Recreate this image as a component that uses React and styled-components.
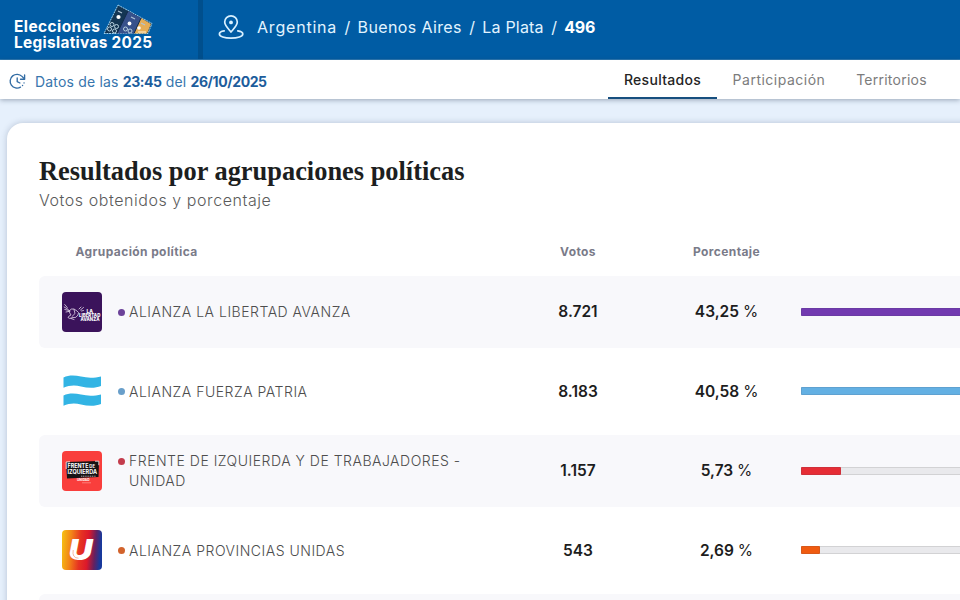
import React from 'react'
import styled, { createGlobalStyle } from 'styled-components'

const parties = [
  { id: 'lla', name: ['ALIANZA LA LIBERTAD AVANZA'], votes: '8.721', percent: 43.25, color: '#723ab0', dot: '#6c4299' },
  { id: 'fp', name: ['ALIANZA FUERZA PATRIA'], votes: '8.183', percent: 40.58, color: '#63b0e3', dot: '#699fca' },
  { id: 'fit', name: ['FRENTE DE IZQUIERDA Y DE TRABAJADORES -', 'UNIDAD'], votes: '1.157', percent: 5.73, color: '#e62d35', dot: '#c33c4c' },
  { id: 'pu', name: ['ALIANZA PROVINCIAS UNIDAS'], votes: '543', percent: 2.69, color: '#f05b10', dot: '#d2632c' },
]

const tabs = [
  { label: 'Resultados', width: 109, tracking: 0.3, active: true },
  { label: 'Participación', width: 124, tracking: 0.5 },
  { label: 'Territorios', width: 101, tracking: 0.25 },
]

const formatPercent = (value) => value.toFixed(2).replace('.', ',')

const BallotIcon = () => (
  <svg width="50" height="31" viewBox="0 0 50 31">
    <g strokeLinejoin="round">
      <path d="M15 1 L49 19.5 L45 29.5 H1 Z" fill="#143653" stroke="#9bd0ef" strokeWidth="1" strokeDasharray="2 .7" />
      <path d="M25 7 L38 14 L31 29.5 H14 Z" fill="#37518b" />
      <path d="M38 14 L48 20 L44 29.5 H31 Z" fill="#e5ad57" />
      <path d="M25 7 L14 29.5 M38 14 L31 29.5" stroke="#122c4b" strokeWidth="1" />
    </g>
    <g fill="#fff">
      <circle cx="15.5" cy="13" r="2.1" />
      <circle cx="26.5" cy="19.5" r="1.9" />
      <circle cx="36" cy="24" r="1.8" />
    </g>
    <path d="M15 7 l4 2 M28 13 l4 2 M38 19 l4 2" stroke="#afc4d5" strokeWidth="1.2" />
    <g fill="none" stroke="#b8d2df" strokeWidth="1">
      <circle cx="9" cy="20.5" r="2" />
      <circle cx="13.5" cy="22.5" r="2" />
      <circle cx="6.5" cy="25" r="2" />
      <circle cx="11.5" cy="27" r="2" />
      <circle cx="22.5" cy="25" r="2" />
      <circle cx="27" cy="27" r="2" />
    </g>
    <path d="M35 28 h8" stroke="#fff4d9" strokeWidth="1" />
  </svg>
)

const PinIcon = () => (
  <svg width="26" height="26" viewBox="0 0 26 26" fill="none" stroke="#d9f1ff" strokeWidth="1.7" strokeLinejoin="round">
    <path d="M13 18 C10.7 15.2 6.7 11.6 6.7 8.1 A6.3 6.3 0 0 1 19.3 8.1 C19.3 11.6 15.3 15.2 13 18 Z" />
    <circle cx="13" cy="8.4" r="1.9" fill="#d9f1ff" stroke="none" />
    <path d="M6.2 16.9 C3 17.4 1.4 18.4 1.4 19.9 C1.4 22.4 6.4 24.2 13 24.2 S24.8 22.4 24.8 19.9 C24.8 18.4 23 17.4 19.8 16.9" strokeLinecap="round" />
  </svg>
)

const UpdateIcon = () => (
  <svg width="17" height="17" viewBox="0 0 17 17" fill="none" stroke="#326ca4" strokeWidth="1.35" strokeLinecap="round" strokeLinejoin="round">
    <path d="M11.5 14.2 A6.9 6.9 0 1 1 13 3.4 L15.5 6" />
    <path d="M15.6 2 V6.2 H11.5" />
    <path d="M8.2 5 V8.7 L10.9 10" />
    <path d="M13.5 12.5 h.1 M15 9.9 h.1" />
  </svg>
)

const LibertadLogo = () => (
  <svg width="40" height="40" viewBox="0 0 40 40">
    <rect width="40" height="40" rx="4" fill="#3b135b" />
    <g fill="none" stroke="#e4d9ec" strokeWidth=".8" strokeLinecap="round">
      <path d="M2.7 12.5 l2.6 3 M2.2 15 l4 2.4 M2.8 17.5 l4.4 1 M4 20 l4 -.8" />
      <path d="M7 19 q2-3 5-2 l3 2 q2.5 1 1 4 q-2 3.5-5 2.5 q-4 2-5 0 q1-2 3-2.5 q-1.5-2-2-4" />
      <path d="M12 17.5 l1 4 l-3 3 M9 26.5 l3 1 M17 17 l2-2 M18.5 18 l3-2.5 M19.5 19 l2-.5" />
    </g>
    <g fill="#fff" fontFamily="Inter, sans-serif" fontWeight="800" fontSize="4.6">
      <text x="24.5" y="20.8" textLength="6.5" lengthAdjust="spacingAndGlyphs">LA</text>
      <text x="17" y="25" textLength="21.3" lengthAdjust="spacingAndGlyphs">LIBERTAD</text>
      <text x="18.5" y="29.2" textLength="19" lengthAdjust="spacingAndGlyphs">AVANZA</text>
    </g>
  </svg>
)

const PatriaLogo = () => (
  <svg width="40" height="40" viewBox="0 0 40 40" fill="#32b4e4">
    <path d="M1.5 6.5 C7 3.8 13 4.2 19 5.6 C26 7.2 33 6.9 39 5.4 V15 C33 17.4 26 17.1 19 15.4 C13 14 7 14.2 1.5 16.8 Z" />
    <path d="M1.5 24.5 C7 21.8 13 22.2 19 23.6 C26 25.2 33 24.9 39 23.4 V33 C33 35.4 26 35.1 19 33.4 C13 32 7 32.2 1.5 34.8 Z" />
  </svg>
)

const IzquierdaLogo = () => (
  <svg width="40" height="40" viewBox="0 0 40 40">
    <rect width="40" height="40" rx="4" fill="#f93e3c" />
    <path d="M4 11 L37 10 L36.5 26 L5 27.5 Z" fill="#171315" />
    <path d="M4.2 18 V11 L8 10.8 M33 10.2 h3.8 v4" fill="none" stroke="#fff" strokeWidth=".8" />
    <g fill="#fff" fontFamily="Inter, sans-serif" fontWeight="700">
      <text x="5.5" y="17.4" fontSize="6" textLength="21" lengthAdjust="spacingAndGlyphs">FRENTE</text>
      <text x="27.3" y="17.2" fontSize="4.4" textLength="5.7" lengthAdjust="spacingAndGlyphs">DE</text>
      <text x="5.5" y="23.4" fontSize="6" textLength="29.5" lengthAdjust="spacingAndGlyphs">IZQUIERDA</text>
      <text x="15" y="30.3" fontSize="3.4" textLength="12.5" lengthAdjust="spacingAndGlyphs">UNIDAD</text>
    </g>
    <path d="M19 25.2 H34" stroke="#b9b0b0" strokeWidth=".9" strokeDasharray="1.2 .6" />
    <path d="M20 31.8 h9" stroke="#ffaaa5" strokeWidth=".6" />
  </svg>
)

const ProvinciasLogo = () => (
  <svg width="40" height="40" viewBox="0 0 40 40">
    <defs>
      <linearGradient id="provincias" x1="0" y1="0" x2="1" y2="0.08">
        <stop offset="0" stopColor="#f6c313" />
        <stop offset=".25" stopColor="#f28118" />
        <stop offset=".48" stopColor="#e63322" />
        <stop offset=".68" stopColor="#dc182b" />
        <stop offset=".86" stopColor="#642160" />
        <stop offset="1" stopColor="#18399c" />
      </linearGradient>
    </defs>
    <rect width="40" height="40" rx="4" fill="url(#provincias)" />
    <text x="6.4" y="30" fill="#fff" fontFamily="Inter, sans-serif" fontWeight="900" fontStyle="italic" fontSize="29" textLength="24" lengthAdjust="spacingAndGlyphs">U</text>
    <path d="M11.2 20 Q9.8 28 16.5 28.2" fill="none" stroke="#ef8a62" strokeWidth=".6" />
  </svg>
)

const logos = {
  lla: LibertadLogo,
  fp: PatriaLogo,
  fit: IzquierdaLogo,
  pu: ProvinciasLogo,
}

const App = () => {
  return (
    <Page>
      <GlobalStyle />
      <Header>
        <Brand>
          <BrandTop>
            <BrandText $tracking={0.45}>Elecciones</BrandText>
            <BallotIcon />
          </BrandTop>
          <BrandText $tracking={0.31}>Legislativas 2025</BrandText>
        </Brand>
        <Location>
          <PinIcon />
          <Breadcrumb>
            <Crumb $tracking={0.8}>Argentina</Crumb>
            <Crumb>/</Crumb>
            <Crumb $tracking={0.37}>Buenos Aires</Crumb>
            <Crumb>/</Crumb>
            <Crumb $tracking={0.2}>La Plata</Crumb>
            <Crumb>/</Crumb>
            <Crumb $tracking={-0.2} $current>496</Crumb>
          </Breadcrumb>
        </Location>
      </Header>
      <SubHeader>
        <Updated>
          <UpdateIcon />
          <UpdatedText>
            Datos de las <b>23:45</b> del <b>26/10/2025</b>
          </UpdatedText>
        </Updated>
        <Tabs>
          {tabs.map((tab) => (
            <Tab key={tab.label} $width={tab.width} $tracking={tab.tracking} $active={tab.active}>
              {tab.label}
            </Tab>
          ))}
        </Tabs>
      </SubHeader>
      <Main>
        <Card>
          <Title>Resultados por agrupaciones políticas</Title>
          <Subtitle>Votos obtenidos y porcentaje</Subtitle>
          <TableHead>
            <HeadCell $first>Agrupación política</HeadCell>
            <HeadCell>Votos</HeadCell>
            <HeadCell>Porcentaje</HeadCell>
          </TableHead>
          <Rows>
            {parties.map((party, index) => {
              const Logo = logos[party.id]
              return (
                <Row key={party.id} $striped={index % 2 === 0}>
                  <Party>
                    <Logo />
                    <PartyName>
                      <Dot $color={party.dot} />
                      <div>
                        {party.name.map((line) => (
                          <NameLine key={line}>{line}</NameLine>
                        ))}
                      </div>
                    </PartyName>
                  </Party>
                  <Figure>{party.votes}</Figure>
                  <Figure>
                    {formatPercent(party.percent)} <small>%</small>
                  </Figure>
                  <Track>
                    <Bar $color={party.color} style={{ width: `${party.percent}%` }} />
                  </Track>
                </Row>
              )
            })}
            <Row $striped />
          </Rows>
        </Card>
      </Main>
    </Page>
  )
}

export default App

const GlobalStyle = createGlobalStyle`
  * {
    box-sizing: border-box;
  }

  body {
    margin: 0;
    overflow: hidden;
    font-family: Inter, 'Liberation Sans', sans-serif;
    background: #e6f0fc;
  }

  svg {
    display: block;
    flex: none;
  }
`

const Page = styled.div`
  display: flex;
  flex-direction: column;
  height: 600px;
  overflow: hidden;
  background: #e6f0fc;
`

const Header = styled.header`
  display: flex;
  flex: none;
  height: 60px;
  background: #005ca4;
  border-bottom: 1px solid #2a78b2;
`

const Brand = styled.div`
  width: 203px;
  padding: 4px 0 0 14px;
  border-right: 5px solid #004f8d;
`

const BrandTop = styled.div`
  display: flex;
  align-items: flex-end;
  gap: 3px;
  height: 31px;
`

const BrandText = styled.div`
  color: #fff;
  font-size: 15.4px;
  font-weight: 700;
  line-height: 16px;
  letter-spacing: ${(props) => props.$tracking}px;
  white-space: nowrap;
`

const Location = styled.div`
  display: flex;
  align-items: center;
  gap: 13px;
  height: 54px;
  padding-left: 15px;
`

const Breadcrumb = styled.div`
  display: flex;
  gap: 7.35px;
  line-height: 20px;
  white-space: nowrap;
`

const Crumb = styled.span`
  color: ${(props) => (props.$current ? '#fff' : '#e2f4ff')};
  font-size: 16px;
  font-weight: ${(props) => (props.$current ? 700 : 400)};
  letter-spacing: ${(props) => props.$tracking || 0}px;
`

const SubHeader = styled.div`
  position: relative;
  display: flex;
  flex: none;
  justify-content: space-between;
  height: 39px;
  padding: 0 18px 0 9px;
  background: #fff;
  box-shadow: 0 1px 5px rgba(40, 60, 85, 0.42);
`

const Updated = styled.div`
  display: flex;
  align-items: center;
  gap: 9px;
  padding-top: 4px;
`

const UpdatedText = styled.div`
  color: #3876ad;
  font-size: 14px;
  letter-spacing: 0.18px;
  white-space: nowrap;

  b {
    color: #1d5d9c;
    font-weight: 700;
    letter-spacing: -0.42px;
  }
`

const Tabs = styled.nav`
  display: flex;
`

const Tab = styled.div`
  width: ${(props) => props.$width}px;
  height: 39px;
  border-bottom: 2px solid ${(props) => (props.$active ? '#174f7f' : 'transparent')};
  color: ${(props) => (props.$active ? '#242424' : '#7c7c7c')};
  font-size: 14px;
  font-weight: ${(props) => (props.$active ? 500 : 400)};
  line-height: 39px;
  letter-spacing: ${(props) => props.$tracking}px;
  text-align: center;
`

const Main = styled.main`
  padding: 24px 0 0 7px;
`

const Card = styled.section`
  width: 1525px;
  height: 700px;
  padding: 32px;
  background: #fff;
  border-radius: 16px;
  box-shadow: 0 0 6px rgba(40, 60, 90, 0.25);
`

const Title = styled.h1`
  margin: 0;
  color: #1c1e20;
  font-family: 'Liberation Serif', serif;
  font-size: 26.4px;
  font-weight: 700;
  line-height: 33px;
`

const Subtitle = styled.p`
  margin: 0;
  color: #5b5b5b;
  font-size: 16px;
  font-weight: 300;
  line-height: 24px;
  letter-spacing: 0.56px;
`

const columns = '465px 148px 149px 698px'

const TableHead = styled.div`
  display: grid;
  grid-template-columns: ${columns};
  height: 64.35px;
  padding-top: 30px;
`

const HeadCell = styled.div`
  padding-left: ${(props) => (props.$first ? '36.5px' : 0)};
  color: #7a7b89;
  font-size: 12px;
  font-weight: 700;
  line-height: 20px;
  letter-spacing: 0.4px;
  text-align: ${(props) => (props.$first ? 'left' : 'center')};
`

const Rows = styled.div`
  display: flex;
  flex-direction: column;
  gap: 8px;
`

const Row = styled.div`
  display: grid;
  grid-template-columns: ${columns};
  align-items: center;
  height: 71.4px;
  background: ${(props) => (props.$striped ? '#f8f8fb' : '#fff')};
  border-radius: 6px;
`

const Party = styled.div`
  display: flex;
  align-items: center;
  gap: 16px;
  padding-left: 23px;
`

const PartyName = styled.div`
  display: flex;
  gap: 4px;
  padding-top: 0.6px;
`

const Dot = styled.span`
  flex: none;
  width: 7px;
  height: 7px;
  margin-top: 6.5px;
  background: ${(props) => props.$color};
  border-radius: 50%;
`

const NameLine = styled.div`
  color: #4d4d4d;
  font-size: 14px;
  font-weight: 300;
  line-height: 20px;
  letter-spacing: 0.51px;
  white-space: nowrap;
`

const Figure = styled.div`
  padding-top: 0.6px;
  color: #1d1d1d;
  font-size: 15.5px;
  font-weight: 600;
  line-height: 20px;
  text-align: center;

  small {
    font-size: inherit;
    font-weight: 400;
  }
`

const Track = styled.div`
  height: 8px;
  background: #e9e9ec;
  border: 1px solid #d2d2d4;
  border-width: 1px 0;
  border-radius: 1px;
`

const Bar = styled.div`
  height: 8px;
  margin-top: -1px;
  background: ${(props) => props.$color};
  border-radius: 1px;
  box-shadow: inset 0 0 0 1px rgba(70, 70, 90, 0.14);
`
